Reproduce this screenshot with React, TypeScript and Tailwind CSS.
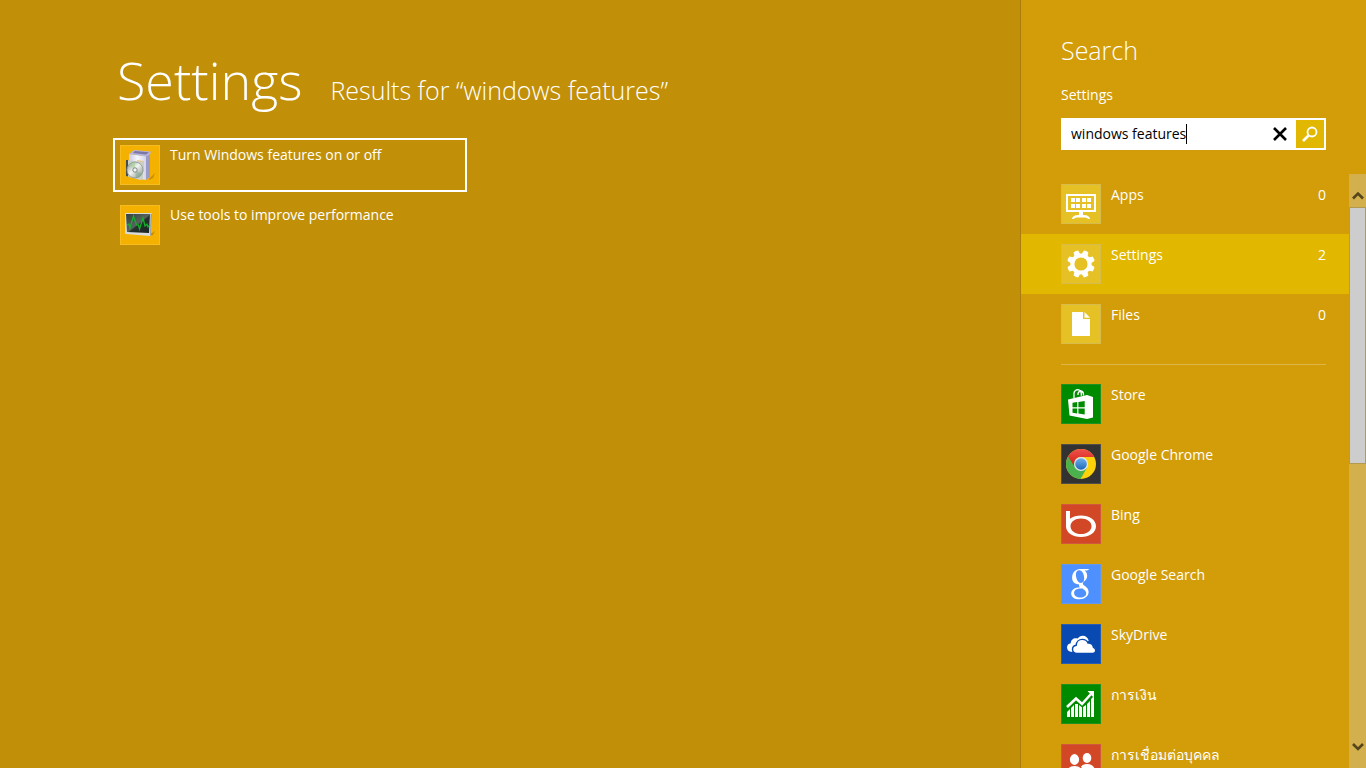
import { ReactNode, useState } from "react";
import clsx from "clsx";

type SearchItem = {
  name: string;
  tile: string;
  icon: ReactNode;
  count?: number;
};

function AppsIcon() {
  return (
    <svg viewBox="0 0 40 40" className="size-full" fill="#fff">
      <path
        fillRule="evenodd"
        d="M5 10h30v18H5zM7 12v14h26V12z"
      />
      <path d="M10 14h4v4h-4zM15 14h4v4h-4zM21 14h4v4h-4zM26 14h4v4h-4zM10 20h4v4h-4zM15 20h4v4h-4zM21 20h4v4h-4zM26 20h4v4h-4z" />
      <path d="M18 28h4v3c3 0 6.500.6 7 4-3 0-3-1.500-5.500-1.500h-7c-2.500 0-2.500 1.500-5.500 1.500.5-3.400 4-4 7-4z" />
    </svg>
  );
}

function GearIcon() {
  return (
    <svg viewBox="0 0 40 40" className="size-full">
      <circle cx="20" cy="20" r="8.600" fill="none" stroke="#fff" strokeWidth="4" />
      <g fill="#fff">
        {[22.5, 67.5, 112.5, 157.5, 202.5, 247.5, 292.5, 337.5].map((angle) => (
          <path
            key={angle}
            d="M16.800 11l.8-4.500q2.400-.9 4.800 0l.8 4.500z"
            transform={`rotate(${angle} 20 20)`}
          />
        ))}
      </g>
    </svg>
  );
}

function FileIcon() {
  return (
    <svg viewBox="0 0 40 40" className="size-full" fill="#fff">
      <path d="M11 8h11v7h7v17H11z" />
      <path d="M23.500 8l5.500 5.700h-5.500z" />
    </svg>
  );
}

function StoreIcon() {
  return (
    <svg viewBox="0 0 40 40" className="size-full">
      <path
        d="M13 14V9q.5-3 4-3.300 3 .3 3.300 4v2M17 11V9.500q.8-2.500 3-2.500 2.500.5 2.500 3.500v1"
        fill="none"
        stroke="#fff"
        strokeWidth="1.300"
      />
      <path d="M7 15.500L26 11l6 2v20.500L26 35 8.500 31.500z" fill="#fff" />
      <path
        d="M11.500 18.800l4.700-.7v5.200h-4.700zM17.400 17.900l6.300-1v6.400h-6.300zM11.500 24.400h4.700v5l-4.700-.7zM17.400 24.400h6.300v6.200l-6.300-1z"
        fill="#008a00"
      />
    </svg>
  );
}

function ChromeIcon() {
  return (
    <svg viewBox="0 0 40 40" className="size-full">
      <defs>
        <linearGradient id="chromeRed" x1="0" y1="0" x2="0" y2="1">
          <stop offset="0" stopColor="#f0524a" />
          <stop offset="1" stopColor="#ce1a15" />
        </linearGradient>
        <linearGradient id="chromeBlue" x1="0" y1="0" x2="0" y2="1">
          <stop offset="0" stopColor="#6fb0ea" />
          <stop offset="1" stopColor="#1d68b8" />
        </linearGradient>
      </defs>
      <circle cx="20" cy="20" r="15" fill="#fdd20a" />
      <path d="M20 20L7 12.500A15 15 0 0 0 19.500 35L26.100 23.500z" fill="#4bb14e" />
      <path d="M7 12.500A15 15 0 0 1 33.300 13H20a7 7 0 0 0-6.500 9.500z" fill="url(#chromeRed)" />
      <circle cx="20" cy="20" r="7" fill="#e4e9ee" />
      <circle cx="20" cy="20" r="5.800" fill="url(#chromeBlue)" />
    </svg>
  );
}

function BingIcon() {
  return (
    <svg viewBox="0 0 40 40" className="size-full">
      <path d="M5 7h4v15H5z" fill="#fff" />
      <path
        fillRule="evenodd"
        d="M20 11.500c8.500 0 15 4.500 15 10.700S28.500 33 20 33 5 28.500 5 22.200 11.500 11.500 20 11.500zm0 3c-6 0-10.500 3.300-10.500 7.700S14 30 20 30s10.500-3.300 10.500-7.800S26 14.500 20 14.500z"
        fill="#fff"
      />
    </svg>
  );
}

function GoogleIcon() {
  return (
    <svg viewBox="0 0 40 40" className="size-full" fill="#fff">
      <path
        fillRule="evenodd"
        d="M19 5h9.500l-2.300 1.600h-2.700c1.800 1.300 2.700 3 2.700 5.200 0 2.600-1.300 4.100-2.900 5.400-1.100.9-1.500 1.400-1.500 2.200 0 .9.700 1.400 1.900 2.300 2.600 1.900 3.900 3.500 3.900 6.400 0 4-3.600 7.200-9.300 7.200-5 0-8.100-2.300-8.100-5.800 0-3.900 3.600-6 8.700-6.300-.8-.9-1.100-1.700-.8-2.900-4.200.2-7-2.400-7-6.500C11.100 8.500 14.500 5 19 5zm-.6 1.300c-2.300 0-3.500 1.700-3.500 4.300 0 3.600 1.800 8.400 4.800 8.400 2.400 0 3.500-1.700 3.500-4.400 0-4.300-2-8.300-4.800-8.300zm1.700 18.200c-4.300 0-7 1.500-7 4.400 0 2.700 2.600 4.600 6.400 4.600 3.600 0 5.700-1.700 5.700-4.300 0-1.900-1.100-2.800-3.800-4.700z"
      />
    </svg>
  );
}

function SkyDriveIcon() {
  return (
    <svg viewBox="0 0 40 40" className="size-full">
      <path
        d="M11 28c-3 0-5-1.800-5-4.400 0-2.500 1.600-4.100 3.800-4.400 0-3 2.200-5 5-5 .7 0 1.300.1 1.800.4 1.200-1.900 3-2.900 5.100-2.900 3 0 5.400 2 6 5z"
        fill="#fff"
      />
      <path
        d="M16 29.500c-2.700 0-4.500-1.800-4.500-4 0-2.300 1.600-3.900 3.700-4.200.2-3.400 2.800-5.900 6.100-5.900 2.600 0 4.700 1.300 5.700 3.600 3.300-.2 5.300 1.700 5.400 4.300 1.500.5 2.300 1.600 2.300 3 0 1.900-1.400 3.200-3.300 3.200z"
        fill="#fff"
        stroke="#094ab2"
        strokeWidth="1.400"
      />
    </svg>
  );
}

function FinanceIcon() {
  return (
    <svg viewBox="0 0 40 40" className="size-full">
      <path
        d="M6 28l3-3v8H6zM10 24l3-3v12h-3zM14 20h3v13h-3zM18 21l3 2v10h-3zM22 23l3-2v12h-3zM26 20l3-3v16h-3zM30 15l3-3v21h-3z"
        fill="#fff"
      />
      <path d="M6 23l9-8.500 6 5.500 9-10" fill="none" stroke="#008a00" strokeWidth="5" />
      <path d="M6 23l9-8.500 6 5.500 9-10" fill="none" stroke="#fff" strokeWidth="2.600" />
      <path d="M26.500 7H33v7z" fill="#fff" />
    </svg>
  );
}

function PeopleIcon() {
  return (
    <svg viewBox="0 0 40 40" className="size-full" fill="#fff">
      <ellipse cx="26" cy="14" rx="4.300" ry="5" />
      <path d="M18 32c0-8 2-12 8-12s9 4 9 12z" />
      <g stroke="#d24726" strokeWidth="1.200">
        <path d="M4 33c0-8 3-11.500 9.500-11.500S23 25 23 33z" />
        <ellipse cx="13.500" cy="15.500" rx="5.200" ry="6" />
      </g>
    </svg>
  );
}

function ProgramsIcon() {
  return (
    <svg viewBox="0 0 40 40" className="size-full">
      <defs>
        <linearGradient id="boxSide" x1="0" y1="0" x2="1" y2="0">
          <stop offset="0" stopColor="#c9c9e2" />
          <stop offset=".5" stopColor="#f7f7fc" />
          <stop offset="1" stopColor="#d4d4ea" />
        </linearGradient>
        <linearGradient id="disc" x1="0" y1="0" x2="1" y2="1">
          <stop offset="0" stopColor="#868e8b" />
          <stop offset=".45" stopColor="#f2f4f0" />
          <stop offset="1" stopColor="#7f8c85" />
        </linearGradient>
      </defs>
      <path d="M29 34l6-6-2 5-4 2z" fill="#a87500" opacity=".6" />
      <path d="M9 9l17 2v24L9 32z" fill="url(#boxSide)" />
      <path d="M26 11l4-2v23l-4 3z" fill="#9c9ac6" />
      <path d="M9 9l5-4 17 1.500-1 3-4 2z" fill="#b5b3d6" />
      <path d="M13 8l2-2 14 1.300-3 2.200z" fill="#7a77a8" />
      <path d="M17 15l7 1v11l-6-2z" fill="#ecc78c" />
      <path d="M6 15l17 2v17l-3 1-14-4z" fill="#c9d0ca" />
      <path d="M6 15h2v16.500L6 31z" fill="#474d4b" />
      <circle cx="15" cy="25" r="8" fill="url(#disc)" stroke="#8d9692" strokeWidth=".8" />
      <path d="M15 25L9 20q3-3 6-3z" fill="#9fd38b" opacity=".5" />
      <path d="M15 25l7 4q-2 3-6 4z" fill="#6ea282" opacity=".4" />
      <circle cx="15" cy="25" r="2.200" fill="#f5f5f5" stroke="#7e8582" />
    </svg>
  );
}

function PerformanceIcon() {
  return (
    <svg viewBox="0 0 40 40" className="size-full">
      <defs>
        <linearGradient id="monitor" x1="0" y1="0" x2="1" y2="1">
          <stop offset="0" stopColor="#35403c" />
          <stop offset=".5" stopColor="#58625e" />
          <stop offset=".55" stopColor="#26302d" />
          <stop offset="1" stopColor="#1c2422" />
        </linearGradient>
      </defs>
      <path d="M29 30l6-4-2 4-4 1z" fill="#a87500" opacity=".6" />
      <path d="M5 8.500q0-.5.500-.5h25.500q1 0 1 1l-1 21q0 1-1 1L6 29q-1 0-1-1z" fill="#d9dbdb" />
      <path d="M30.500 9h1.500l-1 21-1 1z" fill="#979c9c" />
      <path d="M6 9h24l-1 19-22-1z" fill="url(#monitor)" />
      <path
        d="M7 20l2-1 1 4 3.500-12 3 9 2 0 1 4 3.500-11 2 8 2-2 1 3 1.500-2"
        fill="none"
        stroke="#12b52a"
        strokeWidth="1.200"
      />
    </svg>
  );
}

const scopes: SearchItem[] = [
  { name: "Apps", tile: "bg-[#e6c126] border-[#d5bc4b]", icon: <AppsIcon />, count: 0 },
  { name: "Settings", tile: "bg-[#e6c126] border-[#d5bc4b]", icon: <GearIcon />, count: 2 },
  { name: "Files", tile: "bg-[#e6c126] border-[#d5bc4b]", icon: <FileIcon />, count: 0 },
];

const apps: SearchItem[] = [
  { name: "Store", tile: "bg-[#008a00] border-[#1f9123]", icon: <StoreIcon /> },
  { name: "Google Chrome", tile: "bg-[#323232] border-[#4d4d4d]", icon: <ChromeIcon /> },
  { name: "Bing", tile: "bg-[#d24726] border-[#d0583f]", icon: <BingIcon /> },
  { name: "Google Search", tile: "bg-[#4d90fe] border-[#6198ee]", icon: <GoogleIcon /> },
  { name: "SkyDrive", tile: "bg-[#094ab2] border-[#285cb0]", icon: <SkyDriveIcon /> },
  { name: "การเงิน", tile: "bg-[#008a00] border-[#1f9123]", icon: <FinanceIcon /> },
  { name: "การเชื่อมต่อบุคคล", tile: "bg-[#d24726] border-[#d0583f]", icon: <PeopleIcon /> },
];

const results: SearchItem[] = [
  { name: "Turn Windows features on or off", tile: "bg-[#f5b100] border-[#f7bc22]", icon: <ProgramsIcon /> },
  { name: "Use tools to improve performance", tile: "bg-[#f5b100] border-[#f7bc22]", icon: <PerformanceIcon /> },
];

function Tile({ item }: { item: SearchItem }) {
  return (
    <span className={clsx("relative block size-10 shrink-0 border", item.tile)}>
      <span className="absolute -inset-px">{item.icon}</span>
    </span>
  );
}

function SearchRow({
  item,
  active,
  onClick,
}: {
  item: SearchItem;
  active?: boolean;
  onClick: () => void;
}) {
  return (
    <li>
      <button
        type="button"
        onClick={onClick}
        className={clsx(
          "flex w-full items-start gap-2.5 py-2.5 pl-10 pr-[23px] text-left text-sm leading-[22px]",
          active && "bg-[#e1b700]"
        )}
      >
        <Tile item={item} />
        <span className="flex-1 whitespace-nowrap">{item.name}</span>
        {item.count !== undefined && <span>{item.count}</span>}
      </button>
    </li>
  );
}

function ScrollBar() {
  return (
    <div className="flex w-[17px] shrink-0 flex-col items-stretch bg-[#d3b04d]">
      <button type="button" aria-label="Scroll up" className="flex h-[33px] items-end justify-center pb-[7px]">
        <svg viewBox="0 0 12 10" className="h-2.5 w-3">
          <path d="M1 8.500l5-5 5 5" fill="none" stroke="#54461a" strokeWidth="2.600" />
        </svg>
      </button>
      <div className="h-[257px] border border-[#b39a51] bg-[#cdcdcd]" />
      <div className="flex-1" />
      <button type="button" aria-label="Scroll down" className="flex h-8 items-center justify-center pb-2.5">
        <svg viewBox="0 0 12 10" className="h-2.5 w-3">
          <path d="M1 2l5 5 5-5" fill="none" stroke="#54461a" strokeWidth="2.600" />
        </svg>
      </button>
    </div>
  );
}

function App() {
  const [query, setQuery] = useState("windows features");
  const [scope, setScope] = useState("Settings");

  return (
    <div className="flex h-screen overflow-hidden bg-[#c19008] font-['Open_Sans','Noto_Sans',sans-serif] text-white">
      <main className="min-w-0 flex-1 pl-[113px] pt-11">
        <h1 className="flex items-baseline gap-7 pl-1 font-light leading-[72px]">
          <span className="text-[52px]">{scope}</span>
          <span className="text-[25px]">Results for “{query}”</span>
        </h1>
        <ul className="mt-3 flex w-[354px] flex-col gap-1.5">
          {results.map((item, i) => (
            <li key={item.name}>
              <a
                href="#"
                className={clsx(
                  "flex items-start gap-2.5 border-2 p-[5px] text-sm leading-5",
                  i === 0 ? "border-white" : "border-transparent"
                )}
              >
                <Tile item={item} />
                <span>{item.name}</span>
              </a>
            </li>
          ))}
        </ul>
      </main>

      <aside className="flex w-[346px] shrink-0 flex-col border-l border-[#a97e0c] bg-[#d29d09]">
        <div className="px-10 pb-6 pt-8">
          <h2 className="text-[25px] leading-9 font-light">Search</h2>
          <label htmlFor="query" className="mt-4 block text-sm leading-[22px]">
            {scope}
          </label>
          <form
            className="mt-3 flex h-8 items-center border-2 border-white bg-white text-black"
            onSubmit={(e) => e.preventDefault()}
          >
            <div className="flex min-w-0 flex-1 items-center pl-2">
              <input
                id="query"
                type="text"
                value={query}
                onChange={(e) => setQuery(e.target.value)}
                className="field-sizing-content min-w-0 text-sm leading-5 caret-transparent outline-none"
              />
              <span className="h-5 w-px shrink-0 bg-black" />
            </div>
            <button
              type="button"
              aria-label="Clear"
              onClick={() => setQuery("")}
              className="flex size-8 items-center justify-center"
            >
              <svg viewBox="0 0 14 14" className="size-3.5">
                <path d="M1 1l12 12M13 1L1 13" stroke="#000" strokeWidth="2.600" />
              </svg>
            </button>
            <button
              type="submit"
              aria-label="Search"
              className="flex size-7 items-center justify-center bg-[#e1b700]"
            >
              <svg viewBox="0 0 16 16" className="size-4" fill="none" stroke="#fff">
                <circle cx="10" cy="6" r="4.500" strokeWidth="1.800" />
                <path d="M6.500 9.500L1 15" strokeWidth="2.600" />
              </svg>
            </button>
          </form>
        </div>

        <div className="flex min-h-0 flex-1">
          <div className="min-w-0 flex-1 overflow-hidden">
            <ul>
              {scopes.map((item) => (
                <SearchRow
                  key={item.name}
                  item={item}
                  active={item.name === scope}
                  onClick={() => setScope(item.name)}
                />
              ))}
            </ul>
            <hr className="mb-[9px] ml-10 mr-[23px] mt-2.5 border-[#ddb548]" />
            <ul>
              {apps.map((item) => (
                <SearchRow
                  key={item.name}
                  item={item}
                  active={item.name === scope}
                  onClick={() => setScope(item.name)}
                />
              ))}
            </ul>
          </div>
          <ScrollBar />
        </div>
      </aside>
    </div>
  );
}

export default App;
